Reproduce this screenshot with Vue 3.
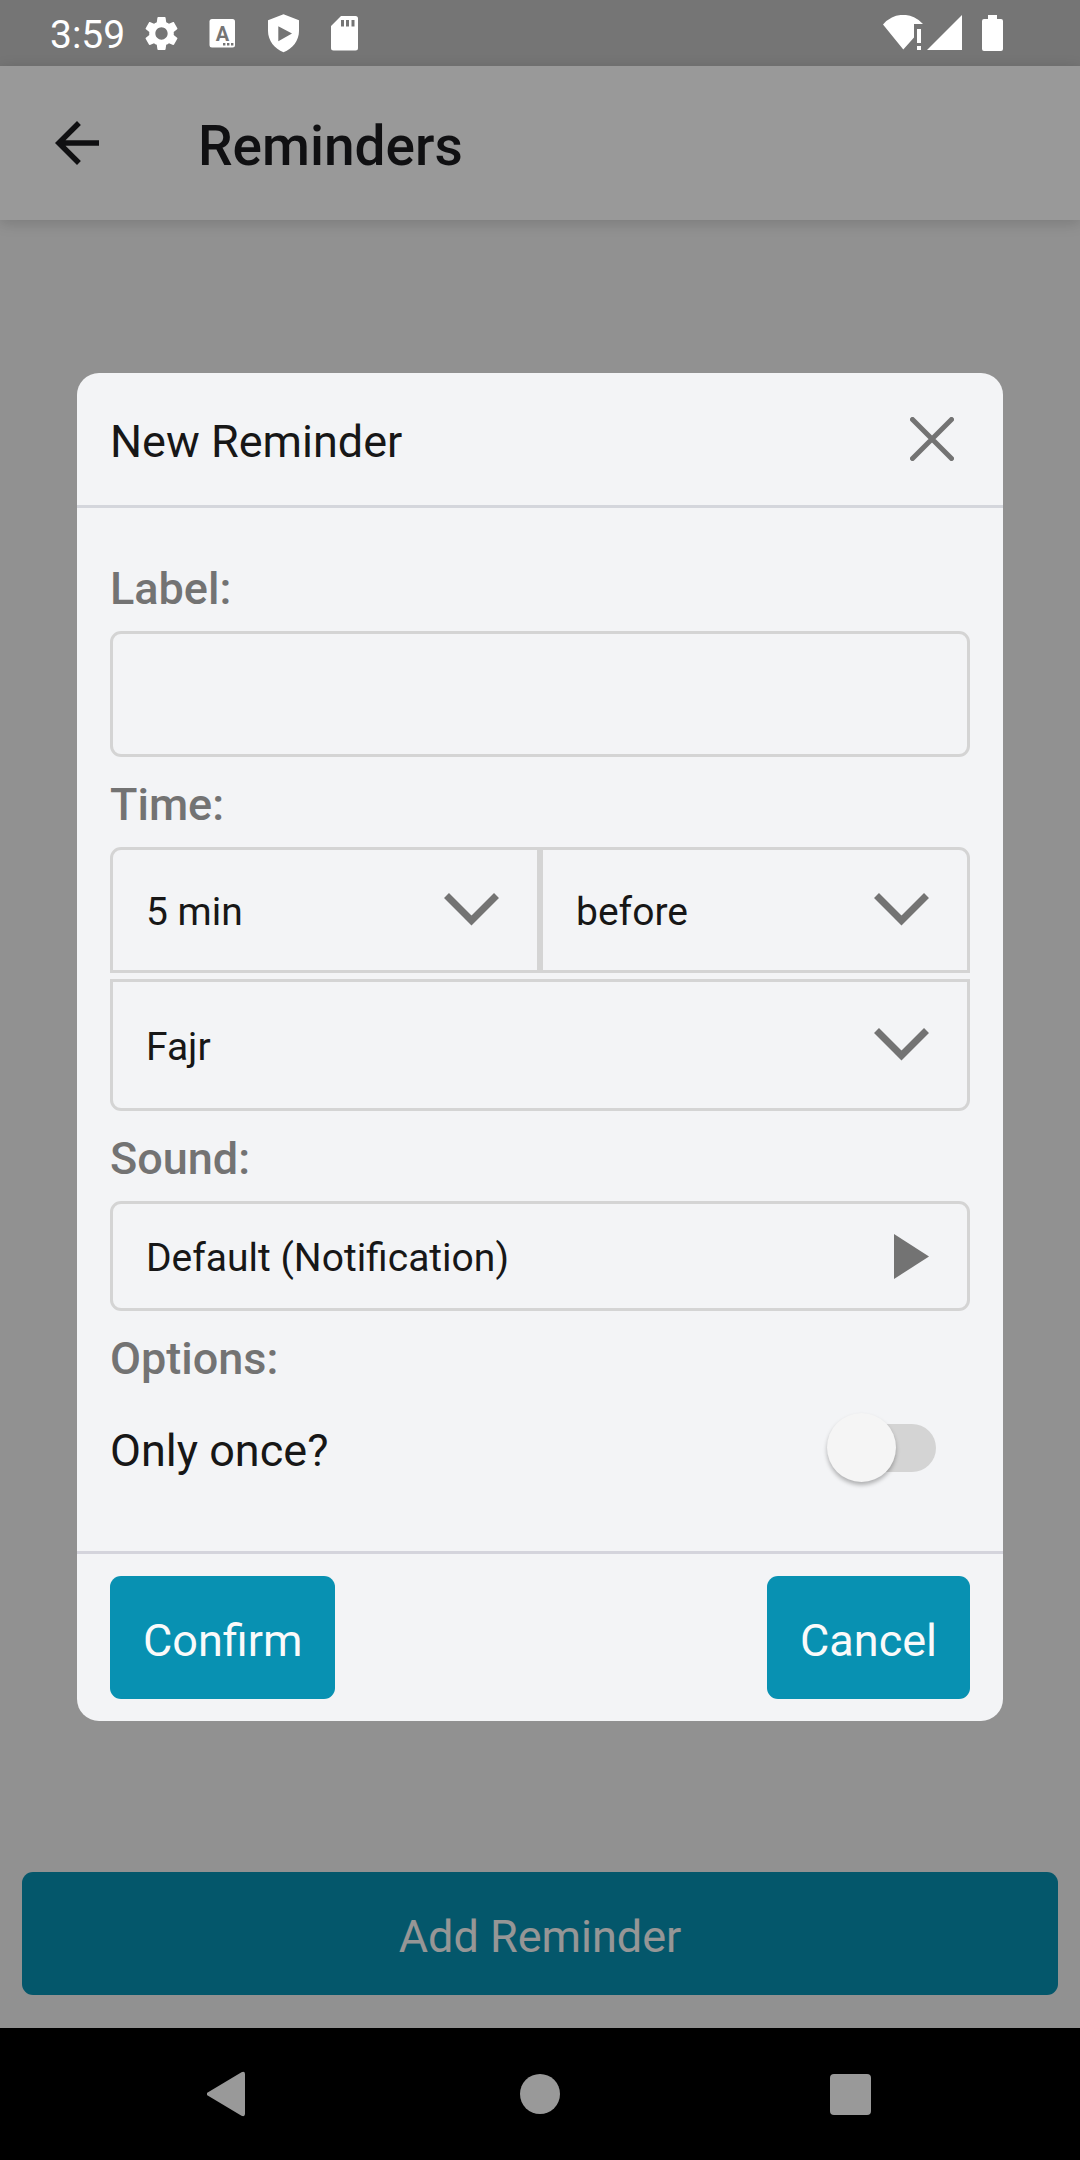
<script setup>
import { ref } from 'vue'

const label = ref('')
const offset = ref('5 min')
const direction = ref('before')
const prayer = ref('Fajr')
const once = ref(false)

const offsets = ['5 min', '10 min', '15 min', '30 min']
const directions = ['before', 'after']
const prayers = ['Fajr', 'Dhuhr', 'Asr', 'Maghrib', 'Isha']
</script>

<template>
  <div class="screen">
    <header class="status">
      <div class="status-left">
        <span class="clock">3:59</span>
        <svg class="tray" viewBox="0 0 24 24" aria-hidden="true">
          <path d="M19.14 12.94c.04-.3.06-.61.06-.94 0-.32-.02-.64-.07-.94l2.03-1.58c.18-.14.23-.41.12-.61l-1.92-3.32c-.12-.22-.37-.29-.59-.22l-2.39.96c-.5-.38-1.03-.7-1.62-.94l-.36-2.54c-.04-.24-.24-.41-.48-.41h-3.84c-.24 0-.43.17-.47.41l-.36 2.54c-.59.24-1.13.57-1.62.94l-2.39-.96c-.22-.08-.47 0-.59.22L2.74 8.87c-.12.21-.08.47.12.61l2.03 1.58c-.05.3-.09.63-.09.94s.02.64.07.94l-2.03 1.58c-.18.14-.23.41-.12.61l1.92 3.32c.12.22.37.29.59.22l2.39-.96c.5.38 1.03.7 1.62.94l.36 2.54c.05.24.24.41.48.41h3.84c.24 0 .44-.17.47-.41l.36-2.54c.59-.24 1.13-.56 1.62-.94l2.39.96c.22.08.47 0 .59-.22l1.92-3.32c.12-.22.07-.47-.12-.61l-2.01-1.58zM12 15.6c-1.98 0-3.6-1.62-3.6-3.6s1.62-3.6 3.6-3.6 3.6 1.62 3.6 3.6-1.62 3.6-3.6 3.6z" />
        </svg>
        <svg class="tray" viewBox="0 0 41 41" aria-hidden="true">
          <rect x="7.5" y="6" width="25.5" height="28.5" rx="2.5" />
          <text class="tray-letter" x="20.5" y="28" text-anchor="middle">A</text>
          <path class="tray-cut" d="M21 30h2.4v2.4H21zM25 30h2.4v2.4H25zM29 30h2.4v2.4H29z" />
        </svg>
        <svg class="tray" viewBox="0 0 41 41" aria-hidden="true">
          <path fill-rule="evenodd" d="M20.5 1.3 36 7.2V18c0 9.5-6.5 18-15.5 21.2C11.5 36 5 27.5 5 18V7.2zM15.3 13.2v15.1L29 20.5z" />
        </svg>
        <svg class="tray" viewBox="0 0 41 41" aria-hidden="true">
          <path fill-rule="evenodd" d="M17 3h14.5a2.5 2.5 0 0 1 2.5 2.5v29.5a2.5 2.5 0 0 1-2.5 2.5H9.5A2.5 2.5 0 0 1 7 35V13zM17 7v6.5h3V7zM22 7v6.5h3V7zM27.5 7v6.5h3V7z" />
        </svg>
      </div>
      <div class="status-right">
        <svg width="40" height="36" viewBox="0 0 40 36" aria-hidden="true">
          <path d="M0 9.5A26 26 0 0 1 40 9H31V22.5L20.3 34.5ZM34 14h4v14h-4zM34 31h4v4h-4z" />
        </svg>
        <svg class="signal" width="35" height="36" viewBox="0 0 35 36" aria-hidden="true">
          <path d="M0 35 35 0V35Z" />
        </svg>
        <svg class="battery" width="21" height="36" viewBox="0 0 21 36" aria-hidden="true">
          <path d="M6 0h9v4h4a2 2 0 0 1 2 2v28a2 2 0 0 1-2 2H2a2 2 0 0 1-2-2V6a2 2 0 0 1 2-2h4z" />
        </svg>
      </div>
    </header>

    <div class="app">
      <div class="topbar">
        <button class="back" type="button" aria-label="Back">
          <svg width="66" height="66" viewBox="0 0 24 24" aria-hidden="true">
            <path d="M20 11H7.83l5.59-5.59L12 4l-8 8 8 8 1.41-1.41L7.83 13H20v-2z" />
          </svg>
        </button>
        <h1>Reminders</h1>
      </div>
      <main class="page">
        <button class="btn" type="button">Add Reminder</button>
      </main>

      <div class="scrim">
        <form class="modal" role="dialog" aria-labelledby="modal-title" @submit.prevent>
          <div class="modal-head">
            <h2 id="modal-title">New Reminder</h2>
            <button class="close" type="button" aria-label="Close">
              <svg width="44" height="44" viewBox="0 0 44 44" aria-hidden="true">
                <path d="M2.5 2.5 41.5 41.5M41.5 2.5 2.5 41.5" />
              </svg>
            </button>
          </div>

          <div class="modal-body">
            <label class="caption" for="label">Label:</label>
            <input id="label" v-model="label" class="box text-input" type="text" />

            <label class="caption" for="offset">Time:</label>
            <div class="pair">
              <div class="picker">
                <select id="offset" v-model="offset" class="box corner-left">
                  <option v-for="o in offsets" :key="o">{{ o }}</option>
                </select>
                <svg class="chevron" viewBox="0 0 55 34" aria-hidden="true"><path d="M2.5 2.5 27.5 27.5 52.5 2.5" /></svg>
              </div>
              <div class="picker">
                <select v-model="direction" class="box corner-right" aria-label="Before or after">
                  <option v-for="d in directions" :key="d">{{ d }}</option>
                </select>
                <svg class="chevron" viewBox="0 0 55 34" aria-hidden="true"><path d="M2.5 2.5 27.5 27.5 52.5 2.5" /></svg>
              </div>
            </div>
            <div class="picker">
              <select v-model="prayer" class="box corner-bottom" aria-label="Prayer">
                <option v-for="p in prayers" :key="p">{{ p }}</option>
              </select>
              <svg class="chevron" viewBox="0 0 55 34" aria-hidden="true"><path d="M2.5 2.5 27.5 27.5 52.5 2.5" /></svg>
            </div>

            <label class="caption" for="sound">Sound:</label>
            <button id="sound" class="box sound" type="button">
              <span>Default (Notification)</span>
              <svg width="35" height="45" viewBox="0 0 35 45" aria-hidden="true"><path d="M0 0 35 22.5 0 45Z" /></svg>
            </button>

            <p class="caption">Options:</p>
            <div class="option">
              <label for="once">Only once?</label>
              <input id="once" v-model="once" class="switch" type="checkbox" role="switch" />
            </div>
          </div>

          <div class="modal-foot">
            <button class="btn" type="submit">Confirm</button>
            <button class="btn" type="button">Cancel</button>
          </div>
        </form>
      </div>
    </div>

    <nav class="navbar" aria-label="System">
      <button type="button" aria-label="Back">
        <svg width="46" height="46" viewBox="0 0 46 46" aria-hidden="true">
          <path d="M1.5 21 34.5 1.2Q38 0 38 3V43Q38 46 34.5 44.8L1.5 25Q-2.5 23 1.5 21Z" />
        </svg>
      </button>
      <button type="button" aria-label="Home">
        <svg width="46" height="46" viewBox="0 0 46 46" aria-hidden="true"><circle cx="23" cy="23" r="20" /></svg>
      </button>
      <button type="button" aria-label="Recent apps">
        <svg width="46" height="46" viewBox="0 0 46 46" aria-hidden="true"><rect x="3" y="3" width="41" height="41" rx="4" /></svg>
      </button>
    </nav>
  </div>
</template>

<style>
body {
  margin: 0;
  background: #f2f2f2;
}
</style>

<style scoped>
* {
  box-sizing: border-box;
}

.screen {
  display: flex;
  flex-direction: column;
  min-height: 100vh;
  font-family: Roboto, sans-serif;
  font-size: 45px;
  line-height: 53px;
  color: #171717;
}

h1,
h2,
p {
  margin: 0;
}

button,
input,
select {
  margin: 0;
  font: inherit;
  color: inherit;
}

button {
  padding: 0;
  border: 0;
  background: none;
}

svg {
  display: block;
}

/* Status bar */
.status {
  display: flex;
  justify-content: space-between;
  height: 66px;
  padding: 0 77px 0 50px;
  background: #757575;
  color: #fff;
}

.status-left,
.status-right {
  display: flex;
  align-items: center;
}

.status-left {
  gap: 20px;
}

.clock {
  width: 71px;
  padding-top: 4px;
  font-size: 39px;
  line-height: 46px;
  white-space: nowrap;
}

.status svg {
  fill: #fff;
}

.tray {
  width: 41px;
  height: 41px;
}

.status .tray-letter {
  font-size: 20px;
  font-weight: 700;
  fill: #757575;
}

.tray-cut {
  fill: #757575;
}

.signal {
  margin-left: 4px;
}

.battery {
  margin-left: 20px;
}

/* App behind the dialog */
.app {
  position: relative;
  display: flex;
  flex: 1;
  flex-direction: column;
  background: #f2f2f2;
}

.topbar {
  display: flex;
  align-items: center;
  gap: 88px;
  height: 154px;
  padding: 0 44px;
  background: #fff;
  box-shadow: 0 3px 14px rgba(0, 0, 0, 0.16);
}

.back svg {
  fill: #1c1c1e;
}

h1 {
  padding-top: 6px;
  font-size: 55px;
  font-weight: 500;
  line-height: 64px;
  color: #1c1c1e;
}

.page {
  display: flex;
  flex: 1;
  flex-direction: column;
  justify-content: flex-end;
  padding: 0 22px 33px;
}

.btn {
  padding: 38px 33px 32px;
  border-radius: 11px;
  background: #0891b2;
  color: #fafafa;
}

.scrim {
  position: absolute;
  inset: 0;
  display: flex;
  align-items: center;
  padding: 0 77px;
  background: rgba(0, 0, 0, 0.4);
}

/* Dialog */
.modal {
  flex: 1;
  border-radius: 22px;
  background: #f3f4f6;
}

.modal-head {
  display: flex;
  align-items: center;
  justify-content: space-between;
  height: 135px;
  padding: 0 49px 0 33px;
  border-bottom: 3px solid #d4d6dc;
}

h2 {
  padding-top: 5px;
  font-size: 45px;
  font-weight: 400;
  line-height: 53px;
}

.close path {
  fill: none;
  stroke: #737373;
  stroke-width: 5;
  stroke-linecap: round;
}

.modal-body {
  padding: 33px 33px 57px;
}

.caption {
  display: block;
  padding: 21px 0 16px;
  font-weight: 500;
  color: #737373;
}

.box {
  display: block;
  width: 100%;
  height: 126px;
  padding: 4px 33px 0;
  border: 3px solid #d4d4d4;
  border-radius: 11px;
  outline: 0;
  background: transparent;
  font-size: 39px;
  line-height: 46px;
  appearance: none;
}

.pair {
  display: flex;
  margin-bottom: 6px;
}

.picker {
  position: relative;
  flex: 1;
}

.corner-left {
  border-radius: 11px 0 0 0;
}

.corner-right {
  border-radius: 0 11px 0 0;
}

.corner-bottom {
  height: 132px;
  border-radius: 0 0 11px 11px;
}

.chevron {
  position: absolute;
  top: 0;
  right: 41px;
  bottom: 0;
  width: 55px;
  height: 34px;
  margin: auto 0;
  pointer-events: none;
}

.chevron path {
  fill: none;
  stroke: #737373;
  stroke-width: 7;
}

.sound {
  display: flex;
  align-items: center;
  justify-content: space-between;
  height: 110px;
  padding: 0 38px 0 33px;
}

.sound span {
  padding-top: 4px;
}

.sound svg {
  fill: #737373;
}

.option {
  display: flex;
  align-items: center;
  justify-content: space-between;
  height: 93px;
  padding-right: 34px;
}

.option label {
  padding-top: 5px;
}

.switch {
  position: relative;
  width: 109px;
  height: 69px;
  appearance: none;
}

.switch::before {
  position: absolute;
  inset: 11px 0 10px 11px;
  border-radius: 24px;
  background: #d4d4d4;
  content: '';
}

.switch::after {
  position: absolute;
  top: 0;
  left: 0;
  width: 69px;
  height: 69px;
  border-radius: 50%;
  background: #f5f5f5;
  box-shadow: 0 3px 4px rgba(0, 0, 0, 0.28);
  content: '';
}

.switch:checked::after {
  right: 0;
  left: auto;
}

.modal-foot {
  display: flex;
  justify-content: space-between;
  padding: 22px 33px;
  border-top: 3px solid #d4d4dc;
}

/* System navigation */
.navbar {
  display: flex;
  align-items: center;
  justify-content: center;
  gap: 264px;
  height: 132px;
  background: #000;
}

.navbar svg {
  fill: #999;
}
</style>
